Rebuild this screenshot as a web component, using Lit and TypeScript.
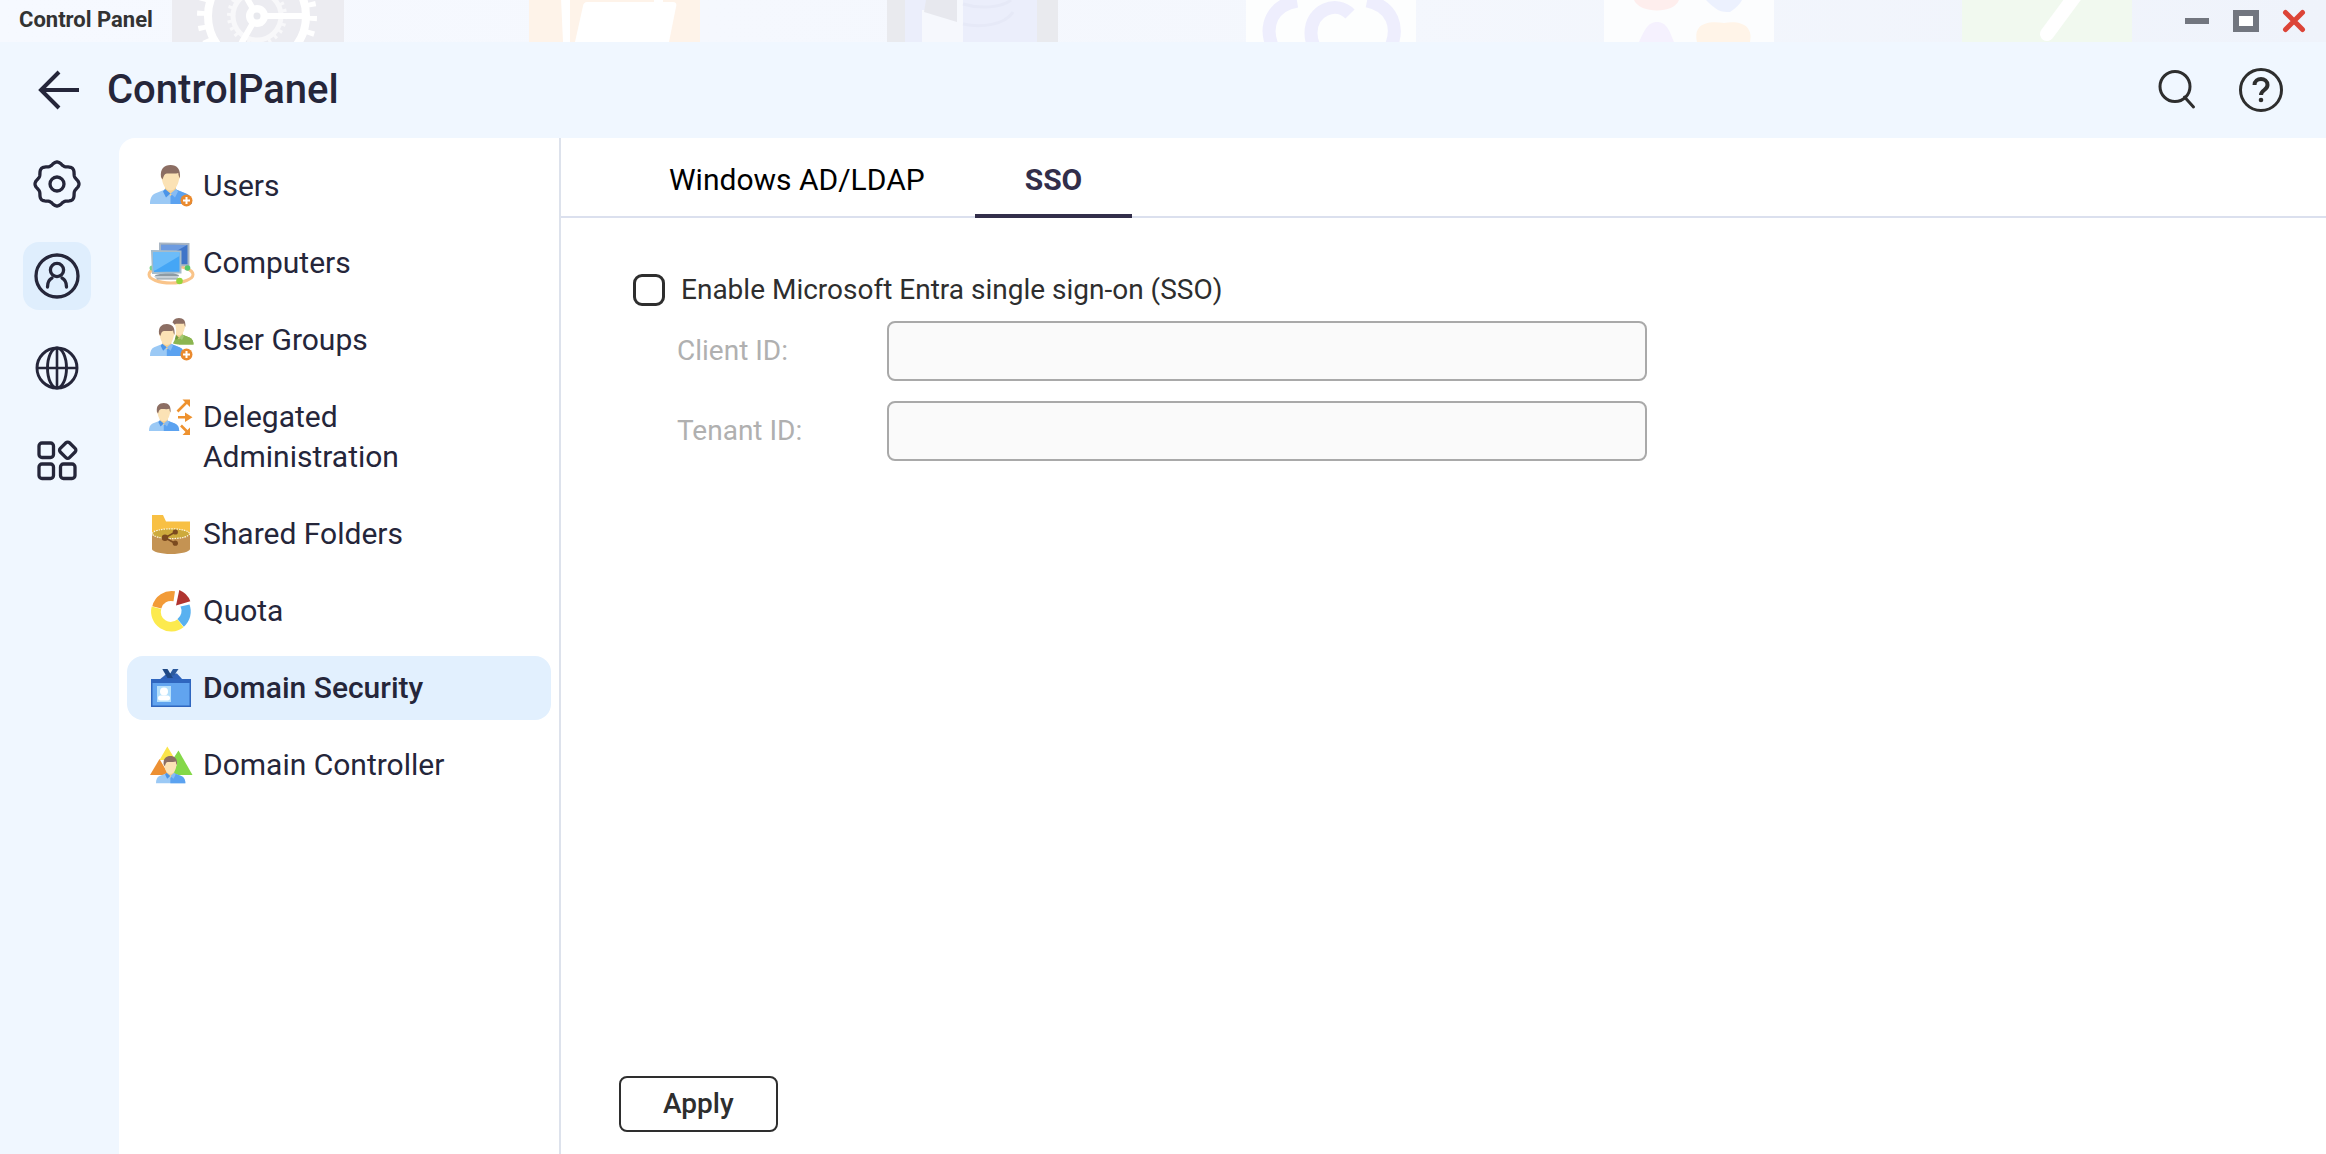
import { LitElement, html, svg, css, nothing } from "lit";
import type { SVGTemplateResult } from "lit";
import { customElement, property, state } from "lit/decorators.js";
import { classMap } from "lit/directives/class-map.js";

/* ---------- drawing helpers ---------- */

const BLUE_SHIRT = ["#9bc9f5", "#5ba2f0", "#4a94e8", "#86bbf3"];
const GREEN_SHIRT = ["#8bb551", "#8bb551", "#739b3c", "#a5c973"];

/** Bust of a person, about 42 x 39 units, head centred at x = 20. */
const person = (x: number, y: number, scale: number, shirt = BLUE_SHIRT) => svg`
  <g transform="translate(${x} ${y}) scale(${scale})">
    <path d="M0 39c0-5 1.500-9 5-10.500l10-4h11l10 4c4 1.500 6 5.500 6 10.500z" fill=${shirt[0]} />
    <path d="M20.500 24.500H26l10 4c4 1.500 6 5.500 6 10.500H20.500z" fill=${shirt[1]} />
    <path d="M15 20h11v5l-5.500 6-5.500-6z" fill="#f3cf93" />
    <path d="M15 24l-2 2.500 3 6 4.500-4z" fill=${shirt[2]} />
    <path d="M26 24l2 2.500-3 6-4.500-4z" fill=${shirt[3]} />
    <path d="M12 9c0-5 3-7 8.500-7S29 4 29 9c1.500 0 1.500 4 0 5.500-1 6-4 11-8.500 11S13 20.500 12 14.500c-1.500-1.500-1.500-5.500 0-5.500z" fill="#fbe2b5" />
    <path d="M11 12C10 4 14 0 20.500 0S31 4 29.800 13c-.8-1-1.300-2.500-1.500-5-4 1.500-10-.5-13 1-1.500.8-2 4-2.800 5.500z" fill="#8c6e63" />
  </g>`;

const plusBadge = svg`
  <circle cx="37.500" cy="36.500" r="6" fill="#ea8a2e" />
  <path d="M37.500 33v7M34 36.500h7" stroke="#fff" stroke-width="2" />`;

const scallop = (() => {
  const points: string[] = [];
  for (let deg = 0; deg < 360; deg += 3) {
    const a = (deg * Math.PI) / 180;
    const r = 20.5 + 1.5 * Math.cos(8 * a);
    points.push(`${(24 + r * Math.cos(a)).toFixed(2)} ${(24 + r * Math.sin(a)).toFixed(2)}`);
  }
  return `M${points.join("L")}Z`;
})();

/* ---------- data ---------- */

interface RailEntry { id: string; label: string; icon: SVGTemplateResult; }
interface MenuEntry { id: string; label: string; icon: SVGTemplateResult; }

const RAIL: RailEntry[] = [
  { id: "system", label: "System", icon: svg`
      <path d=${scallop} /><circle cx="24" cy="24" r="7" />` },
  { id: "privilege", label: "Privilege", icon: svg`
      <circle cx="24" cy="24" r="21" /><circle cx="24" cy="18" r="6.600" />
      <path d="M14.500 35c0-4.500 1.500-7.500 4.500-9M33.500 35c0-4.500-1.500-7.500-4.500-9" stroke-linecap="round" />` },
  { id: "network", label: "Network", icon: svg`
      <g stroke-width="2.900"><circle cx="24" cy="24" r="20" /><ellipse cx="24" cy="24" rx="9.500" ry="20" />
      <path d="M24 4v40M4 24h40" stroke-width="2.600" /></g>` },
  { id: "applications", label: "Applications", icon: svg`
      <rect x="6" y="7" width="14.500" height="14.500" rx="3" />
      <rect x="6" y="28" width="14.500" height="14.500" rx="3" />
      <rect x="27.500" y="28" width="14.500" height="14.500" rx="3" />
      <rect x="28.200" y="7.700" width="13" height="13" rx="2.500" transform="rotate(45 34.700 14.200)" />` },
];

const MENU: MenuEntry[] = [
  { id: "users", label: "Users", icon: svg`${person(1, 1, 1)}${plusBadge}` },
  { id: "computers", label: "Computers", icon: svg`
      <ellipse cx="22" cy="33.500" rx="22" ry="8.500" fill="none" stroke="#f9c48a" stroke-width="3" />
      <path d="M11 2.500l28.500.5v21l-28.500 1z" fill="#3f74c8" stroke="#a9b6c4" stroke-width="2" />
      <path d="M12 4h26L24 12H12z" fill="#6d9be0" />
      <circle cx="38.500" cy="27" r="2.800" fill="#54c86a" />
      <circle cx="3" cy="27" r="2.500" fill="#7fd48a" />
      <path d="M6 34l10-2h8l6 2-2 4.500H8z" fill="#8d9aa3" />
      <path d="M5 35h24v2.500H7z" fill="#c6cfd6" />
      <path d="M3 10l28.500.5v21L4 32z" fill="#45a6f6" stroke="#a6bccb" stroke-width="2" />
      <path d="M4 11h26.500v4L7 29l-2.500 1z" fill="#6cbcf9" />
      <circle cx="30.500" cy="40" r="3.300" fill="#95d53c" />` },
  { id: "groups", label: "User Groups", icon: svg`
      ${person(16, 0, 0.68, GREEN_SHIRT)}
      <path d="M2 39c0-6 2-9 8-10.500l4-2C9 20 8 12 10 8c4-5 12-5 15.500 0 1.500 5 .5 13-3 18l6 2c5 2 8 5 8 11z" fill="#fff" stroke="#fff" stroke-width="2" />
      ${person(1, 6, 0.82)}${plusBadge}` },
  { id: "delegated", label: "Delegated Administration", icon: svg`
      ${person(0, 8, 0.72)}
      <g stroke="#ee922f" stroke-width="2.600">
        <path d="M28.500 16.500L38 7M29 22.300h9M32 30.500l6 6" />
      </g>
      <path d="M33.500 4.500H41V12zM36 17.500l7.500 4.800L36 27zM41 32.500V40h-7.500z" fill="#ee922f" />` },
  { id: "shared", label: "Shared Folders", icon: svg`
      <path d="M3 3h11l3 6.500h24V24H3z" fill="#f8c044" />
      <path d="M3 22v15c0 2.500 8.500 5 19 5s19-2.500 19-5V22z" fill="#c49353" />
      <ellipse cx="22" cy="21.700" rx="18.600" ry="4.900" fill="#cdaa3c" stroke="#fff6dc" stroke-width="1.200" stroke-dasharray="1.500 1" />
      <path d="M26 20.200L16 25.700l10 5.500" fill="none" stroke="#7b4a1f" stroke-width="1.600" />
      <circle cx="16" cy="25.700" r="3.200" fill="#7b4a1f" />
      <circle cx="26.300" cy="20" r="2.600" fill="#7b4a1f" />
      <circle cx="26.300" cy="31.200" r="2.600" fill="#7b4a1f" />` },
  { id: "quota", label: "Quota", icon: svg`
      <path d="M3.300 17.300A20 20 0 0 1 26 2.300l-1.500 10A10 10 0 0 0 12.300 19.500z" fill="#f29b38" />
      <path d="M2.700 17.600A20 20 0 0 0 34.500 38.200L28.500 30.300A10 10 0 0 1 12.200 20z" fill="#fcea4e" />
      <path d="M40.500 15.500A20 20 0 0 1 34.800 37.700L28.500 30A10 10 0 0 0 31.500 17.500z" fill="#59b1f0" />
      <path d="M27 16.500L30.300 1A19 19 0 0 1 41.300 12.300z" fill="#b03430" />` },
  { id: "security", label: "Domain Security", icon: svg`
      <path d="M10 14l8-6.500h10l6 6.500z" fill="#2f63ba" />
      <rect x="2" y="13" width="40" height="28" fill="#2f66bf" />
      <rect x="3.500" y="17" width="37" height="22.500" fill="#61a4ef" />
      <path d="M24 3h5.500L25 9.500h-5z" fill="#2b5a9e" />
      <path d="M13.300 3h5.200l5.500 9h-5.500z" fill="#1f4884" />
      <rect x="8" y="20" width="14" height="16" fill="#b5e0fb" />
      <circle cx="15" cy="25.500" r="4" fill="#fff" />
      <rect x="9" y="29.500" width="12" height="5" rx="2.500" fill="#fff" />` },
  { id: "controller", label: "Domain Controller", icon: svg`
      <path d="M18.300 3.500L26.500 17h-16z" fill="#fae54b" />
      <path d="M10.500 16L20 32H1z" fill="#ec9033" />
      <path d="M29.500 7.500L43.500 32H22V19z" fill="#84d848" />
      ${person(7, 13, 0.7)}` },
];

/* ---------- desktop strip seen through the title bar ---------- */

const desktopStrip = svg`
  <rect x="172" width="172" height="42" fill="#ececf1" />
  <g fill="none" stroke="#fff">
    <circle cx="257" cy="16" r="49" stroke-width="8" />
    <circle cx="257" cy="16" r="56" stroke-width="8" stroke-dasharray="5 9.660" />
    <circle cx="257" cy="16" r="24" stroke-width="5" stroke="#f8f8fa" />
    <circle cx="257" cy="16" r="28" stroke-width="4" stroke="#f8f8fa" stroke-dasharray="3 4.330" />
    <path d="M257 16h46M257 16L234 56M257 16L240-14" stroke-width="6" />
  </g>
  <circle cx="257" cy="16" r="11" fill="#fff" /><circle cx="257" cy="16" r="3.500" fill="#e8e9ee" />

  <rect x="529" width="171" height="42" fill="#fef3e9" />
  <path d="M561-2h9v44h-7zM583 6c0-2 2-4 4-4h86c3 0 4 2 3 5l-7 35h-94zM654-4h9v10h-9z" fill="#fff" />

  <rect x="887" width="171" height="42" fill="#e9eaee" />
  <rect x="905" width="132" height="42" fill="#ebeefb" />
  <path d="M922 10h41v32h-41z" fill="#f6f8fd" />
  <path d="M926 0h31v22l-33-10z" fill="#e7e8ee" />
  <path d="M957 0h6v42h-6z" fill="#f6f8fd" />
  <path d="M963 4c16 5 38 4 48-4M963 24c18 4 42 1 50-12" fill="none" stroke="#e6e9f7" stroke-width="3" />

  <rect x="1246" width="170" height="42" fill="#fdfefe" />
  <path d="M1297 1c-24 4-34 24-24 47M1367 1c25 5 34 26 22 50M1350 14c-14-14-39-4-39 19 0 8 2 12 5 16" fill="none" stroke="#eeeefd" stroke-width="13" />

  <rect x="1604" width="170" height="42" fill="#fcfdfe" />
  <path d="M1634 0h45c-5 14-39 14-45 0z" fill="#feeeed" />
  <path d="M1706 0h36c-2 4-6 8-12 12-4 0-8 0-12-2-5-3-9-7-12-10z" fill="#ecf1fe" />
  <path d="M1639 42c5-10 8-20 18-20s13 10 17 20z" fill="#f5f1fe" />
  <path d="M1697 42c-3-14 4-22 27-19 20-3 29 5 26 19z" fill="#fff4e8" />

  <rect x="1962" width="170" height="42" fill="#f1f9ef" />
  <path d="M2075-4l-28 38" stroke="#fff" stroke-width="14" stroke-linecap="round" />`;

/* ---------- navigation rail ---------- */

@customElement("nav-rail")
class NavRail extends LitElement {
  @property() selected = "";
  static styles = css`
    :host { display: block; flex: none; }
    .rail { display: flex; flex-direction: column; gap: 24px; padding: 12px 28px 12px 23px; }
    .tile { display: block; padding: 10px; border: 0; border-radius: 16px; background: none; cursor: pointer; }
    .tile.on { background: #dfeefd; }
    .glyph { display: block; width: 48px; height: 48px; fill: none; stroke: #25263a; stroke-width: 3.3; stroke-linejoin: round; }
  `;
  render() {
    return html`<nav class="rail" aria-label="Categories">
      ${RAIL.map((r) => html`
        <button class=${classMap({ tile: true, on: r.id === this.selected })} type="button" aria-label=${r.label}>
          <svg class="glyph" viewBox="0 0 48 48" aria-hidden="true">${r.icon}</svg>
        </button>`)}
    </nav>`;
  }
}

/* ---------- side menu ---------- */

@customElement("side-menu")
class SideMenu extends LitElement {
  @property() selected = "";
  static styles = css`
    :host { display: block; flex: none; width: 442px; box-sizing: border-box; border-right: 2px solid #dde2ec; }
    .menu { display: flex; flex-direction: column; gap: 13px; padding: 16px 8px; }
    .item { display: flex; align-items: flex-start; gap: 10px; padding: 10px 22px; border-radius: 16px;
      color: #25263a; text-decoration: none; font-size: 30px; line-height: 40px; }
    .item.on { background: #e2f0fe; font-weight: 500; }
    .icon { flex: none; width: 44px; height: 44px; overflow: visible; }
    .label { padding: 2px 0; max-width: 260px; }
  `;
  render() {
    return html`<nav class="menu" aria-label="Privilege">
      ${MENU.map((m) => {
        const on = m.id === this.selected;
        return html`<a class=${classMap({ item: true, on })} href="#${m.id}" aria-current=${on ? "page" : nothing}>
          <svg class="icon" viewBox="0 0 44 44" aria-hidden="true">${m.icon}</svg>
          <span class="label">${m.label}</span>
        </a>`;
      })}
    </nav>`;
  }
}

/* ---------- SSO form ---------- */

@customElement("sso-settings")
class SsoSettings extends LitElement {
  @state() private enabled = false;
  static styles = css`
    :host { display: flex; flex-direction: column; flex: 1; min-width: 0; }
    .tabs { display: flex; padding-left: 58px; border-bottom: 2px solid #dbe0ee; }
    .tab { margin-bottom: -2px; padding: 22px 50px 14px; border: 0; border-bottom: 4px solid transparent; background: none;
      color: #000; font: 400 30px/40px Roboto, "Liberation Sans", sans-serif; cursor: pointer; }
    .tab.on { border-color: #322e4a; color: #322e4a; font-weight: 700; }
    .form { display: flex; flex-direction: column; flex: 1; padding: 52px 58px 22px; font-size: 28px; line-height: 40px; }
    .toggle { display: flex; align-items: center; gap: 16px; padding-left: 14px; color: #2e2e2e; }
    .box { flex: none; appearance: none; width: 32px; height: 32px; margin: 0; border: 3px solid #2e2e2e; border-radius: 9px; background: #fff; }
    .box:checked { background: #2e2e2e; }
    .fields { display: grid; grid-template-columns: 210px minmax(0, 760px); align-items: center; row-gap: 20px; padding: 11px 0 0 58px; }
    .name { color: #b0b0b0; }
    .value { box-sizing: border-box; width: 100%; height: 60px; padding: 0 16px; border: 2px solid #a9a9a9; border-radius: 8px;
      background: #fafafa; color: #2e2e2e; font: 400 28px Roboto, "Liberation Sans", sans-serif; }
    .actions { margin-top: auto; }
    .apply { box-sizing: border-box; padding: 6px 42px; border: 2px solid #2e2e2e; border-radius: 8px; background: #fff; color: #2e2e2e;
      font: 500 28px/40px Roboto, "Liberation Sans", sans-serif; cursor: pointer; }
  `;
  private toggle(e: Event) {
    this.enabled = (e.target as HTMLInputElement).checked;
  }
  render() {
    return html`
      <div class="tabs" role="tablist">
        <button class="tab" type="button" role="tab" aria-selected="false">Windows AD/LDAP</button>
        <button class="tab on" type="button" role="tab" aria-selected="true">SSO</button>
      </div>
      <form class="form" @submit=${(e: Event) => e.preventDefault()}>
        <div class="toggle">
          <input class="box" id="sso" type="checkbox" .checked=${this.enabled} @change=${this.toggle} />
          <label for="sso">Enable Microsoft Entra single sign-on (SSO)</label>
        </div>
        <div class="fields">
          <label class="name" for="client">Client ID:</label>
          <input class="value" id="client" type="text" ?disabled=${!this.enabled} />
          <label class="name" for="tenant">Tenant ID:</label>
          <input class="value" id="tenant" type="text" ?disabled=${!this.enabled} />
        </div>
        <div class="actions"><button class="apply" type="submit">Apply</button></div>
      </form>`;
  }
}

/* ---------- window ---------- */

@customElement("app-root")
class AppRoot extends LitElement {
  static styles = css`
    :host { display: flex; flex-direction: column; min-height: 100vh; background: #f0f7ff;
      font-family: Roboto, "Liberation Sans", sans-serif; color: #25263a; }
    .titlebar { position: relative; display: flex; align-items: center; justify-content: space-between; height: 42px;
      padding: 0 8px 0 19px; overflow: hidden; background: linear-gradient(90deg, #f6f9ff, #f4f7fd 60%, #eff3fb); }
    .strip { position: absolute; inset: 0; width: 100%; height: 42px; }
    .caption { position: relative; padding-bottom: 2px; color: #333; font-size: 22px; font-weight: 700; line-height: 28px; }
    .controls { position: relative; display: flex; }
    .control { display: block; width: 48px; height: 42px; padding: 0; border: 0; background: none; cursor: pointer; }
    .mark { display: block; width: 48px; height: 42px; fill: none; stroke: #72767f; stroke-width: 6; }
    .mark.close { stroke: #dc4437; stroke-width: 5; }
    .header { display: flex; align-items: center; height: 96px; padding: 0 41px 0 33px; }
    .plain { display: block; padding: 0; border: 0; background: none; cursor: pointer; }
    .glyph { display: block; width: 48px; height: 48px; fill: none; stroke: #2e2e2e; stroke-width: 3; }
    .glyph.back { stroke: #25263a; stroke-width: 4; }
    .title { flex: 1; margin: 0 0 0 26px; font-size: 40px; font-weight: 500; line-height: 48px; }
    .tools { display: flex; gap: 36px; }
    .body { display: flex; flex: 1; }
    .sheet { display: flex; flex: 1; min-width: 0; border-top-left-radius: 16px; background: #fff; }
  `;
  render() {
    return html`
      <header class="titlebar">
        <svg class="strip" viewBox="0 0 2326 42" preserveAspectRatio="xMidYMin slice" aria-hidden="true">${desktopStrip}</svg>
        <span class="caption">Control Panel</span>
        <div class="controls">
          <button class="control" type="button" aria-label="Minimize">
            <svg class="mark" viewBox="0 0 48 42"><path d="M11 21h24" /></svg>
          </button>
          <button class="control" type="button" aria-label="Maximize">
            <svg class="mark" viewBox="0 0 48 42"><rect x="14" y="13" width="20" height="16" fill="#fff" /></svg>
          </button>
          <button class="control" type="button" aria-label="Close">
            <svg class="mark close" viewBox="0 0 48 42"><path d="M15.500 12.500l17 17M32.500 12.500l-17 17" stroke-linecap="round" /></svg>
          </button>
        </div>
      </header>
      <div class="header">
        <button class="plain" type="button" aria-label="Back">
          <svg class="glyph back" viewBox="0 0 48 48"><path d="M46 24H7M26 6L8 24l18 18" /></svg>
        </button>
        <h1 class="title">ControlPanel</h1>
        <div class="tools">
          <button class="plain" type="button" aria-label="Search">
            <svg class="glyph" viewBox="0 0 48 48"><circle cx="22" cy="20.500" r="15" /><path d="M31.500 31l9 10" stroke-linecap="round" /></svg>
          </button>
          <button class="plain" type="button" aria-label="Help">
            <svg class="glyph" viewBox="0 0 48 48">
              <circle cx="24" cy="24" r="20.500" />
              <path d="M17.500 19c0-8 13-8 13 0 0 5-6.500 5-6.500 10" stroke-width="4" />
              <circle cx="24" cy="34" r="2.300" fill="#2e2e2e" stroke="none" />
            </svg>
          </button>
        </div>
      </div>
      <div class="body">
        <nav-rail selected="privilege"></nav-rail>
        <main class="sheet">
          <side-menu selected="security"></side-menu>
          <sso-settings></sso-settings>
        </main>
      </div>`;
  }
}
